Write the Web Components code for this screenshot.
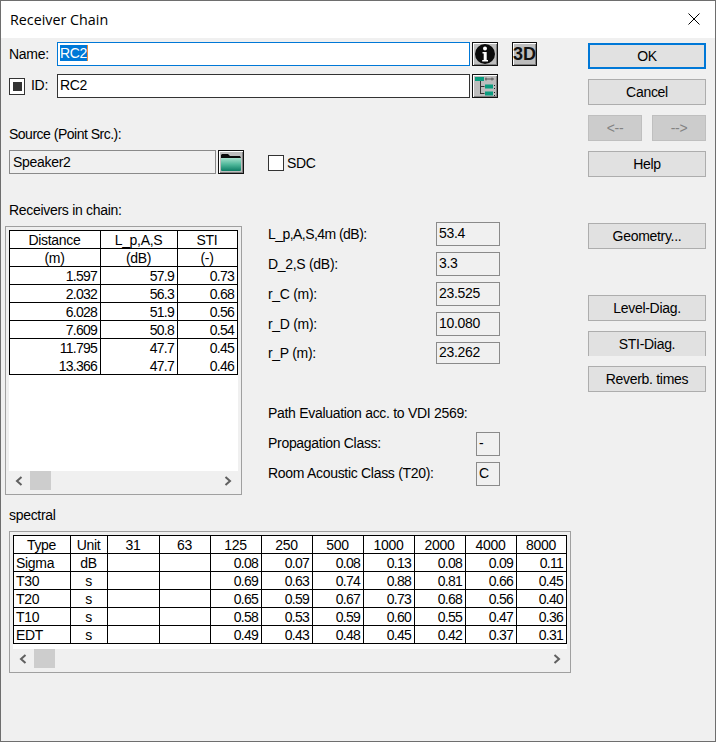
<!DOCTYPE html>
<html lang="en">

<head>
    <meta charset="UTF-8">
    <title>Receiver Chain</title>
    <style>
        html, body { margin: 0; padding: 0; background: #f0f0f0; }
        body { font: 14px "Liberation Sans", Arial, sans-serif; letter-spacing: -.3px; color: #000; }
    </style>
</head>

<body>
    <rc-dialog heading="Receiver Chain">
        <rc-main>
            <rc-top-form></rc-top-form>
            <rc-chain-panel></rc-chain-panel>
            <rc-spectral-panel></rc-spectral-panel>
        </rc-main>
        <rc-actions slot="side"></rc-actions>
    </rc-dialog>

<script>
    // small helper, every component has the same constructor otherwise
    class Base extends HTMLElement {
        constructor(html) {
            super();
            this.attachShadow({ mode: "open" }).innerHTML = html;
        }
    }

    class RcDialog extends Base {
        constructor() {
            super(`<style>
                :host{display:block;width:716px;height:742px;box-sizing:border-box;background:#f0f0f0;
                      border:1px solid #6e6e6e;overflow:hidden}
                header{height:37px;background:#fff;display:flex;align-items:center;justify-content:space-between;padding:0 15px 0 9px;box-sizing:border-box}
                h1{margin:0;font:400 14.3px "Open Sans","Noto Sans",sans-serif;letter-spacing:0;color:#000}
                svg{display:block;position:relative;top:-1px}
                .body{display:flex}
            </style>
            <header><h1></h1>
                <svg width="12" height="12" viewBox="0 0 12 12"><path d="M.5.5l11 11M11.5.5l-11 11" stroke="#000" fill="none"/></svg>
            </header>
            <div class="body"><slot></slot><slot name="side"></slot></div>`);
        }
        connectedCallback() {
            this.shadowRoot.querySelector("h1").textContent = this.getAttribute("heading");
        }
    }

    class RcMain extends Base {
        constructor() {
            super(`<style>:host{display:block;width:579px;padding:4px 0 0 8px;box-sizing:border-box}</style><slot></slot>`);
        }
    }

    class RcButton extends Base {
        constructor() {
            super(`<style>
                :host{display:flex;align-items:center;justify-content:center;box-sizing:border-box;height:26px;width:118px;
                      background:#e1e1e1;border:1px solid #adadad;color:#000;white-space:nowrap}
                :host([primary]){border:2px solid #0078d7}
                :host([disabled]){background:#ccc;border-color:#bfbfbf;color:#838383;width:54px}
                :host([clipped]){height:25px;border-bottom:0}
            </style><slot></slot>`);
        }
    }

    class RcActions extends Base {
        constructor() {
            super(`<style>
                :host{display:flex;flex-direction:column;gap:10px;padding-top:5px;margin-left:8px}
                .pair{display:flex;gap:10px}
                .far{margin-top:36px}
            </style>
            <rc-button primary>OK</rc-button>
            <rc-button>Cancel</rc-button>
            <div class="pair"><rc-button disabled>&lt;--</rc-button><rc-button disabled>--&gt;</rc-button></div>
            <rc-button>Help</rc-button>
            <rc-button class="far">Geometry...</rc-button>
            <rc-button class="far">Level-Diag.</rc-button>
            <rc-button clipped>STI-Diag.</rc-button>
            <rc-button>Reverb. times</rc-button>`);
        }
    }

    class RcField extends Base {
        constructor() {
            super(`<style>
                :host{display:flex;align-items:center;box-sizing:border-box;height:24px;padding:0 2px 2px;border:1px solid #8a8a8a;background:#f0f0f0;white-space:nowrap}
                :host([edit]){background:#fff;border-color:#333;padding:0 2px 2px}
                :host([focused]){border-color:#0078d7}
            </style><slot></slot>`);
        }
    }

    class RcIconBtn extends Base {
        constructor() {
            super(`<style>
                :host{display:flex;align-items:center;justify-content:center;box-sizing:border-box;width:26px;height:24px;
                      background:#bdbdbd;border:1px solid #111;box-shadow:inset 1px 1px 0 #fff,inset -1px -1px 0 #808080;overflow:hidden}
            </style><slot></slot>`);
        }
    }

    class RcCheck extends Base {
        constructor() {
            super(`<style>
                :host{display:flex;align-items:center;justify-content:center;box-sizing:border-box;width:16px;height:16px;background:#fff;border:1px solid #333;flex:none}
                :host([checked]){height:17px}
                :host([checked])::after{content:"";width:9px;height:9px;background:#333}
            </style>`);
        }
    }

    class RcTopForm extends Base {
        constructor() {
            super(`<style>
                :host{display:block}
                .row{display:flex;align-items:center;height:24px;margin-bottom:8px}
                .lbl{width:48px}
                rc-field.wide{width:413px;margin-right:2px;padding-left:2px}
                .sel{background:#0078d7;color:#fff;border-right:1px solid #e8883a}
                .three{width:25px;margin-left:14px;font:700 18px "Liberation Sans",sans-serif;letter-spacing:0;color:#111}
                .cap{line-height:16px;margin:28px 0 8px;letter-spacing:-.5px}
                .id{margin:0 0 3px 6px;width:26px}
                .src{width:207px;margin-right:2px;padding:0 3px}
                .sdc{margin:2px 3px 0 24px}
                .sdc-t{padding-top:2px}
            </style>
            <div class="row"><span class="lbl">Name:</span>
                <rc-field class="wide" edit focused><span class="sel">RC2</span></rc-field>
                <rc-icon-btn>
                    <svg width="22" height="22" viewBox="0 0 22 22"><circle cx="11" cy="11" r="10" fill="#0a0a0a"/><circle cx="11" cy="5.6" r="2" fill="#fff"/><path d="M8.500 9h4.200v8h1.300v1.400H8.200V17h1.500v-6.600H8.500z" fill="#fff"/></svg>
                </rc-icon-btn>
                <rc-icon-btn class="three">3D</rc-icon-btn>
            </div>
            <div class="row"><rc-check checked></rc-check><span class="id">ID:</span>
                <rc-field class="wide" edit>RC2</rc-field>
                <rc-icon-btn>
                    <svg width="22" height="21" viewBox="0 0 22 21">
                        <rect x="1" y="1" width="9" height="4" fill="#0a9b7e"/><path d="M11 3h9M12 1.500v3M18 1.500v3" stroke="#555" fill="none"/>
                        <path d="M6.500 5v13M6.500 10.500h4M6.500 17.500h4" stroke="#333" fill="none"/>
                        <rect x="11" y="8.500" width="8" height="4" fill="#0a9b7e"/><rect x="11" y="15.500" width="8" height="4" fill="#0a9b7e"/>
                        <path d="M20 9h1v1h-1zM20 12h1v1h-1zM20 16h1v1h-1zM20 19h1v1h-1z" fill="#222"/>
                    </svg>
                </rc-icon-btn>
            </div>
            <div class="cap">Source (Point Src.):</div>
            <div class="row" style="margin:0">
                <rc-field class="src">Speaker2</rc-field>
                <rc-icon-btn>
                    <svg width="22" height="20" viewBox="0 0 22 20">
                        <defs><linearGradient id="fg" x1="0" y1="0" x2="0" y2="1"><stop offset="0" stop-color="#a5e0cc"/><stop offset=".5" stop-color="#4fb79a"/><stop offset="1" stop-color="#0d7d65"/></linearGradient></defs>
                        <path d="M1 6V3l1-1h6l2 2h10l1 2z" fill="#0a0a0a"/><rect x="1" y="6" width="20" height="13" rx="1" fill="url(#fg)"/>
                    </svg>
                </rc-icon-btn>
                <rc-check class="sdc"></rc-check><span class="sdc-t">SDC</span>
            </div>`);
        }
    }

    class RcGrid extends Base {
        // rows come from a JSON-like config, each cell may have its alignment
        constructor() {
            super(`<style>
                :host{display:block}
                table{border-collapse:separate;border-spacing:0;table-layout:fixed;border-top:1px solid #000;border-left:1px solid #000;background:#fff}
                td{box-sizing:border-box;height:18px;padding:0 3px 0 2px;border-right:1px solid #000;border-bottom:1px solid #000;text-align:right;white-space:nowrap;overflow:hidden;line-height:16px;letter-spacing:-.75px}
                td.c{text-align:center;letter-spacing:-.3px}
                td.l{text-align:left;letter-spacing:-.3px}
                tr.nl td{border-bottom:0}
            </style><table></table>`);
        }
        set config(cfg) {
            const t = this.shadowRoot.querySelector("table");
            t.style.width = cfg.widths.reduce((a, b) => a + b, 1) + "px";
            let html = "<colgroup>" + cfg.widths.map(w => `<col style="width:${w}px">`).join("") + "</colgroup>";
            cfg.rows.forEach((r, i) => {
                const cls = (cfg.noLine || []).includes(i) ? ' class="nl"' : "";
                html += `<tr${cls}>` + r.map((v, j) => {
                    const a = cfg.align ? cfg.align(i, j) : "";
                    return `<td class="${a}">${v}</td>`;
                }).join("") + "</tr>";
            });
            t.innerHTML = html;
        }
    }

    class RcScrollPane extends Base {
        constructor() {
            super(`<style>
                :host{display:block;box-sizing:border-box;border:1px solid #a0a0a0;padding:3px}
                .view{background:#fff;overflow:hidden}
                .bar{height:20px;display:flex;align-items:center;justify-content:space-between;position:relative}
                .arrow{width:20px;display:flex;justify-content:center}
                .thumb{position:absolute;left:21px;top:0;width:21px;height:19px;background:#cdcdcd}
            </style>
            <div class="view"><slot></slot></div>
            <div class="bar">
                <span class="arrow"><svg width="8" height="10" viewBox="0 0 8 10"><path d="M6.500 1L2 5l4.500 4" stroke="#606060" stroke-width="2" fill="none"/></svg></span>
                <span class="thumb"></span>
                <span class="arrow"><svg width="8" height="10" viewBox="0 0 8 10"><path d="M1.500 1L6 5 1.500 9" stroke="#606060" stroke-width="2" fill="none"/></svg></span>
            </div>`);
        }
    }

    class RcChainPanel extends Base {
        constructor() {
            super(`<style>
                :host{display:block;margin-top:28px}
                .cap{line-height:16px;margin-bottom:4px}
                .cols{display:flex;gap:26px;margin-left:-4px}
                rc-scroll-pane{width:237px;height:269px;margin-top:4px}
                rc-scroll-pane rc-grid{height:241px}
                .right{width:232px}
                .r{display:flex;align-items:center;justify-content:space-between;height:24px;margin-bottom:6px}
                .r rc-field{width:64px}
                .r rc-field.s{width:24px}
                .note{line-height:16px;margin:41px 0 11px}
                .tight{letter-spacing:-.55px}
                .up{margin-bottom:2px}
            </style>
            <div class="cap">Receivers in chain:</div>
            <div class="cols">
                <rc-scroll-pane><rc-grid></rc-grid></rc-scroll-pane>
                <div class="right">
                    <div class="r"><span class="tight">L_p,A,S,4m (dB):</span><rc-field>53.4</rc-field></div>
                    <div class="r"><span>D_2,S (dB):</span><rc-field>3.3</rc-field></div>
                    <div class="r"><span>r_C (m):</span><rc-field>23.525</rc-field></div>
                    <div class="r"><span>r_D (m):</span><rc-field>10.080</rc-field></div>
                    <div class="r" style="height:22px"><span>r_P (m):</span><rc-field style="height:22px">23.262</rc-field></div>
                    <div class="note">Path Evaluation acc. to VDI 2569:</div>
                    <div class="r"><span class="up">Propagation Class:</span><rc-field class="s">-</rc-field></div>
                    <div class="r" style="margin:0"><span class="up">Room Acoustic Class (T20):</span><rc-field class="s">C</rc-field></div>
                </div>
            </div>`);
            this.shadowRoot.querySelector("rc-grid").config = {
                widths: [91, 77, 60],
                noLine: [6],
                align: i => i < 2 ? "c" : "",
                rows: [
                    ["Distance", "L_p,A,S", "STI"],
                    ["(m)", "(dB)", "(-)"],
                    ["1.597", "57.9", "0.73"],
                    ["2.032", "56.3", "0.68"],
                    ["6.028", "51.9", "0.56"],
                    ["7.609", "50.8", "0.54"],
                    ["11.795", "47.7", "0.45"],
                    ["13.366", "47.7", "0.46"]
                ]
            };
        }
    }

    class RcSpectralPanel extends Base {
        constructor() {
            super(`<style>
                :host{display:block;margin-top:12px}
                .cap{line-height:16px;margin-bottom:8px}
                rc-scroll-pane{width:562px;height:142px}
                rc-scroll-pane rc-grid{height:114px}
            </style>
            <div class="cap">spectral</div>
            <rc-scroll-pane><rc-grid></rc-grid></rc-scroll-pane>`);
            this.shadowRoot.querySelector("rc-grid").config = {
                widths: [57, 37, 52, 51, 51, 51, 51, 51, 51, 51, 50],
                align: (i, j) => i === 0 || j === 1 ? "c" : j === 0 ? "l" : "",
                rows: [
                    ["Type", "Unit", "31", "63", "125", "250", "500", "1000", "2000", "4000", "8000"],
                    ["Sigma", "dB", "", "", "0.08", "0.07", "0.08", "0.13", "0.08", "0.09", "0.11"],
                    ["T30", "s", "", "", "0.69", "0.63", "0.74", "0.88", "0.81", "0.66", "0.45"],
                    ["T20", "s", "", "", "0.65", "0.59", "0.67", "0.73", "0.68", "0.56", "0.40"],
                    ["T10", "s", "", "", "0.58", "0.53", "0.59", "0.60", "0.55", "0.47", "0.36"],
                    ["EDT", "s", "", "", "0.49", "0.43", "0.48", "0.45", "0.42", "0.37", "0.31"]
                ]
            };
        }
    }

    const defs = {
        "rc-dialog": RcDialog, "rc-main": RcMain, "rc-button": RcButton, "rc-actions": RcActions,
        "rc-field": RcField, "rc-icon-btn": RcIconBtn, "rc-check": RcCheck, "rc-top-form": RcTopForm,
        "rc-grid": RcGrid, "rc-scroll-pane": RcScrollPane, "rc-chain-panel": RcChainPanel, "rc-spectral-panel": RcSpectralPanel
    };
    for (const name in defs) customElements.define(name, defs[name]);
</script>
</body>

</html>
